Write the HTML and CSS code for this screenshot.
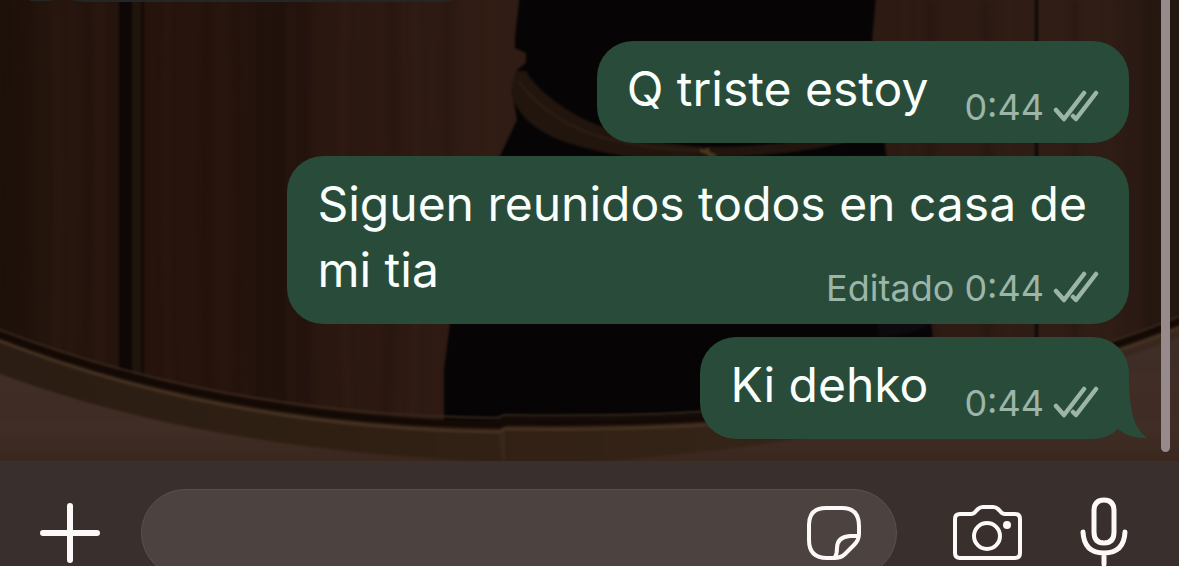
FILE: index.html
```
<!DOCTYPE html>
<html lang="es">
<head>
    <meta charset="UTF-8">
    <meta name="viewport" content="width=device-width, initial-scale=1.0">
    <title>Chat</title>
    <link rel="stylesheet" href="styles.css">
</head>
<body>
    <svg class="sprites" aria-hidden="true">
        <symbol id="ticks" viewBox="0 0 46 34">
            <path d="M3 20l8 9L31 3M20 26l3 3L43 3" fill="none" stroke="currentColor" stroke-width="4.5" stroke-linecap="round" stroke-linejoin="round"/>
        </symbol>
    </svg>

    <main class="chat">
        <!-- wallpaper -->
        <svg class="wallpaper" viewBox="0 0 1179 461" preserveAspectRatio="none" aria-hidden="true">
            <defs>
                <linearGradient id="wood" gradientUnits="userSpaceOnUse" x1="0" y1="0" x2="1179" y2="0">
                    <stop offset="0" stop-color="#1e110a"/>
                    <stop offset=".06" stop-color="#27160e"/>
                    <stop offset=".1" stop-color="#25140d"/>
                    <stop offset=".13" stop-color="#25130c"/>
                    <stop offset=".2" stop-color="#27150e"/>
                    <stop offset=".24" stop-color="#20110b"/>
                    <stop offset=".27" stop-color="#2a1710"/>
                    <stop offset=".42" stop-color="#301c14"/>
                    <stop offset=".76" stop-color="#2c1a13"/>
                    <stop offset=".93" stop-color="#301d16"/>
                    <stop offset="1" stop-color="#241610"/>
                </linearGradient>
                <linearGradient id="wall" x1="0" y1="0" x2="0" y2="1">
                    <stop offset="0" stop-color="#3e2e27"/>
                    <stop offset=".7" stop-color="#402d25"/>
                    <stop offset="1" stop-color="#38251c"/>
                </linearGradient>
                <linearGradient id="rim" x1="0" y1="0" x2="1" y2="0">
                    <stop offset="0" stop-color="#2b1d13"/>
                    <stop offset=".45" stop-color="#322114"/>
                    <stop offset="1" stop-color="#39281f"/>
                </linearGradient>
                <filter id="soft" color-interpolation-filters="sRGB"><feGaussianBlur stdDeviation="1"/></filter>
                <filter id="softer" color-interpolation-filters="sRGB"><feGaussianBlur stdDeviation="3"/></filter>
            </defs>
            <rect width="1179" height="461" fill="url(#wood)"/>
            <!-- wood grain -->
            <g filter="url(#softer)" fill="none" stroke-width="5">
                <path d="M10 0q6 230 0 461M28 0q-4 230 2 461M86 0q8 180 -6 461M208 0q-8 230 4 461M236 0q6 230 0 461M258 0v461M307 0q-4 230 2 461M392 0q8 230 -10 461M448 0q-6 200 20 461M930 0v461M985 0q6 230 0 461M1075 0v461M1150 0v461" stroke="#150a06" stroke-opacity=".28"/>
                <path d="M55 0q8 230 -4 461M100 0v461M168 0q-6 230 4 461M290 0v461M345 0q-8 230 6 461M415 0q6 230 -4 461M490 0v461M905 0v461M1010 0v461M1110 0v461" stroke="#472b20" stroke-opacity=".2"/>
            </g>
            <g filter="url(#soft)">
                <path d="M119 -5h13v475h-13z" fill="#0e0705"/>
                <path d="M132 -5h9v475h-9z" fill="#20150d"/>
                <path d="M141 -5h3v475h-3z" fill="#150b07"/>
                <path d="M1035 -5h3v475h-3z" fill="#0f0806"/>
                <!-- figure -->
                <path d="M520 -5L515 37v11l11 5v10l-9 7-5 20 5 30-17 36q-40 90-50 168l-6 46v60h500l-13-106-45-169-14-116 4-44z" fill="#060405"/>
                <path d="M517 71q-5 10-5 24 8 30 50 46 70 24 146 16 90 0 160-20l-2-8q-80 18-160 18-90-6-140-38-30-20-40-38z" fill="#21150e"/>
                <path d="M519 82q30 40 85 56 60 14 104 12" fill="none" stroke="#2c1c10" stroke-width="3"/>
                <path d="M700 150l16 6M707 148l3 9" stroke="#4d3a1e" stroke-width="3"/>
                <path d="M850 155h37l42 170q-10 8-50 13z" fill="#0c0a0d"/>
            </g>
            <!-- wall under the mirror and its frame -->
            <g filter="url(#soft)">
                <path d="M-5 329Q220 420 497 421l8-3Q920 425 1185 315V470H-5z" fill="url(#rim)"/>
                <path d="M-5 372Q200 450 497 462H590Q920 440 1185 335V470H-5z" fill="url(#wall)"/>
                <path d="M-5 333Q220 421 499 425l6-3Q920 429 1185 319" fill="none" stroke="#140a05" stroke-width="7"/>
                <path d="M-5 328Q220 415 497 418l8-3Q920 423 1185 314" fill="none" stroke="#38281c" stroke-width="2"/>
                <path d="M-5 339Q220 428 499 432l6-3Q920 436 1185 326" fill="none" stroke="#443121" stroke-width="3"/>
                <path d="M499 434l6-3v31h-3z" fill="#38281a"/>
            </g>
            <!-- lower edge of the previous message -->
            <path d="M30 0h25q-8 2-25 1zM72 0h382q-8 2-20 2H90q-12 0-18-2z" fill="#242626"/>
        </svg>

        <div class="messages">
            <div class="bubble">
                Q triste estoy
                <span class="meta">0:44 <svg class="ticks" role="img" aria-label="Entregado"><use href="#ticks"/></svg></span>
            </div>
            <div class="bubble">
                Siguen reunidos todos en casa de mi tia
                <span class="meta">Editado 0:44 <svg class="ticks" role="img" aria-label="Entregado"><use href="#ticks"/></svg></span>
            </div>
            <div class="bubble">
                Ki dehko
                <span class="meta">0:44 <svg class="ticks" role="img" aria-label="Entregado"><use href="#ticks"/></svg></span>
                <svg class="tail" viewBox="0 0 36 64" aria-hidden="true"><path d="M18 0Q18 30 23 45 28 57 36 63 20 64 8 55L0 40z" fill="#284c39"/></svg>
            </div>
        </div>
        <div class="scrollbar"></div>
    </main>

    <form class="composer">
        <button type="button" class="icon-button" aria-label="Adjuntar">
            <svg width="60" height="60" viewBox="0 0 60 60"><path d="M30 3v54M3 30h54" stroke-width="6"/></svg>
        </button>
        <div class="field">
            <input type="text" aria-label="Mensaje">
            <button type="button" class="icon-button" aria-label="Stickers">
                <svg width="56" height="56" viewBox="0 0 56 56"><path d="M20 3h16Q53 3 53 21v8Q53 35 48 40L39 49Q35 53 28 53H21Q3 53 3 35V20Q3 3 20 3zM52 31H44Q31 32 31 43 31 49 29 52" stroke-width="4"/></svg>
            </button>
        </div>
        <button type="button" class="icon-button camera" aria-label="Cámara">
            <svg width="70" height="56" viewBox="0 0 70 56">
                <path d="M7 9h11q3 0 5-3l2-2q2-2 5-2h10q3 0 5 2l2 2q2 3 5 3h10q5 0 5 5v34q0 5-5 5H7q-5 0-5-5V14q0-5 5-5z" stroke-width="4"/>
                <circle cx="34" cy="31" r="13" stroke-width="4"/>
                <circle cx="54" cy="20" r="4" class="dot"/>
            </svg>
        </button>
        <button type="button" class="icon-button" aria-label="Mensaje de voz">
            <svg width="48" height="72" viewBox="0 0 48 72"><path d="M24 3q10 0 10 11v21q0 11-10 11T14 35V14Q14 3 24 3zM3 35q1 21 21 21t21-21M24 56v11" stroke-width="5"/></svg>
        </button>
    </form>
</body>
</html>
```
FILE: styles.css
```
* { box-sizing: border-box; }
body {
    margin: 0;
    height: 100vh;
    overflow: hidden;
    background: #392f2c;
    font-family: Inter, "Liberation Sans", sans-serif;
}
.sprites {
    position: absolute;
    width: 0;
    height: 0;
}
.chat {
    position: relative;
    overflow: hidden;
}
.wallpaper {
    position: absolute;
    top: 0;
    left: 0;
    width: 100%;
    height: 100%;
}
.messages {
    position: relative;
    display: flex;
    flex-direction: column;
    align-items: flex-end;
    gap: 13px;
    padding: 41px 50px 22px;
}
.bubble {
    position: relative;
    max-width: 78%;
    padding: 15px 30px 21px;
    border-radius: 36px;
    background: #284c39;
    color: #fafffc;
    font-size: 48px;
    line-height: 66px;
}
.meta {
    float: right;
    display: flex;
    align-items: center;
    gap: 9px;
    margin: 36px 0 0 36px;
    height: 30px;
    color: #9cb5a8;
    font-size: 36px;
    line-height: 30px;
}
.ticks {
    width: 46px;
    height: 34px;
}
.tail {
    position: absolute;
    right: -18px;
    bottom: 0;
    width: 36px;
    height: 64px;
}
.scrollbar {
    position: absolute;
    top: 0;
    right: 9px;
    bottom: 9px;
    width: 9px;
    border-radius: 0 0 5px 5px;
    background: #968b8a;
}
.composer {
    display: flex;
    align-items: center;
    padding: 28px 51px 0 40px;
    background: #392f2c;
}
.icon-button {
    flex: none;
    padding: 0;
    border: none;
    background: none;
    color: #fdf9f8;
    cursor: pointer;
}
.icon-button svg {
    display: block;
    fill: none;
    stroke: currentColor;
    stroke-linecap: round;
    stroke-linejoin: round;
}
.icon-button .dot {
    fill: currentColor;
    stroke: none;
}
.field {
    flex: 1;
    display: flex;
    align-items: center;
    min-width: 0;
    height: 88px;
    margin: 0 56px 0 41px;
    padding: 0 34px 0 44px;
    border: 1px solid #5a504e;
    border-radius: 44px;
    background: #4c4341;
}
.field input {
    flex: 1;
    min-width: 0;
    border: none;
    outline: none;
    background: none;
    color: #fafffc;
    font: inherit;
    font-size: 48px;
}
.camera { margin-right: 57px; }
```
